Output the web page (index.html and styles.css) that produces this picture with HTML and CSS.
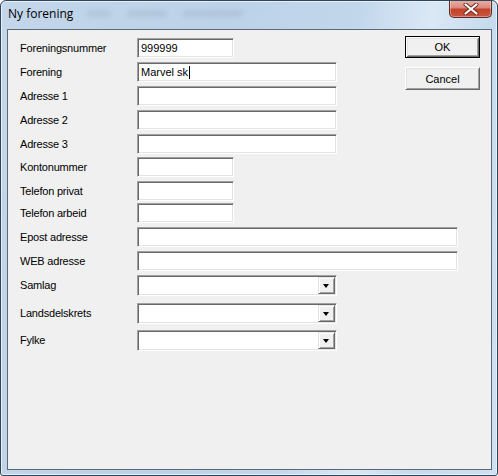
FILE: index.html
```html
<!DOCTYPE html>
<html>
<head>
<meta charset="utf-8">
<link rel="stylesheet" href="styles.css">
</head>
<body>
<div class="window">
  <div class="titlebar">
    <span class="title">Ny forening</span>
    <div class="ghosts">
      <span class="ghost g1"></span>
      <span class="ghost g2"></span>
      <span class="ghost g3"></span>
    </div>
    <button class="close" aria-label="Lukk">
      <svg width="16" height="12" viewBox="0 0 16 12">
        <path d="M2.5 1.5 L13.5 10.5 M13.5 1.5 L2.5 10.5" stroke="#6b2a22" stroke-width="4" stroke-linecap="round"/>
        <path d="M2.5 1.5 L13.5 10.5 M13.5 1.5 L2.5 10.5" stroke="#ffffff" stroke-width="2.2" stroke-linecap="round"/>
      </svg>
    </button>
  </div>
  <div class="client">
    <div class="form">
      <div class="row"><span class="label">Foreningsnummer</span><div class="field short">999999</div></div>
      <div class="row"><span class="label">Forening</span><div class="field medium">Marvel sk<span class="caret"></span></div></div>
      <div class="row"><span class="label">Adresse 1</span><div class="field medium"></div></div>
      <div class="row"><span class="label">Adresse 2</span><div class="field medium"></div></div>
      <div class="row"><span class="label">Adresse 3</span><div class="field medium"></div></div>
      <div class="row tight"><span class="label">Kontonummer</span><div class="field short"></div></div>
      <div class="row"><span class="label">Telefon privat</span><div class="field short"></div></div>
      <div class="row tighter"><span class="label">Telefon arbeid</span><div class="field short"></div></div>
      <div class="row"><span class="label">Epost adresse</span><div class="field long"></div></div>
      <div class="row"><span class="label">WEB adresse</span><div class="field long"></div></div>
      <div class="row"><span class="label">Samlag</span><div class="field medium combo"><span class="drop"></span></div></div>
      <div class="row wide"><span class="label">Landsdelskrets</span><div class="field medium combo"><span class="drop"></span></div></div>
      <div class="row wider"><span class="label">Fylke</span><div class="field medium combo"><span class="drop"></span></div></div>
    </div>
    <div class="buttons">
      <button class="btn default">OK</button>
      <button class="btn">Cancel</button>
    </div>
  </div>
</div>
</body>
</html>
```
FILE: styles.css
```css
html, body {
  margin: 0;
  padding: 0;
  background: #ffffff;
}

.window {
  box-sizing: border-box;
  width: 498px;
  height: 476px;
  border: 1px solid #30455c;
  border-radius: 6px 6px 3px 3px;
  background: linear-gradient(100deg, #c3d6ea 0%, #bcd2e8 40%, #c2d7ec 62%, #dbe8f5 75%, #c6dbee 85%, #cfe1f2 100%);
  box-shadow: inset 0 0 0 1px #e6f0fa;
  display: flex;
  flex-direction: column;
  position: relative;
  overflow: hidden;
}

.titlebar {
  height: 28px;
  display: flex;
  align-items: flex-start;
  position: relative;
}

.title {
  font-family: "Open Sans", "Noto Sans", sans-serif;
  font-size: 12px;
  color: #000;
  margin: 5px 0 0 7px;
  line-height: 16px;
  position: relative;
  z-index: 1;
}

.ghosts {
  display: flex;
  gap: 16px;
  margin: 9px 0 0 14px;
  opacity: 0.14;
  filter: blur(2px);
}

.ghost {
  display: block;
  height: 7px;
  background: #6a7f96;
  border-radius: 3px;
}
.g1 { width: 24px; }
.g2 { width: 40px; }
.g3 { width: 60px; }

.close {
  position: absolute;
  right: 5px;
  top: -1px;
  width: 43px;
  height: 18px;
  padding: 0;
  border: 1px solid #5e2a24;
  border-top: none;
  border-radius: 0 0 5px 5px;
  background: linear-gradient(#e8b2a6 0%, #d98b7b 45%, #c4412b 55%, #c8563f 100%);
  box-shadow: inset 0 0 0 1px rgba(255,255,255,0.35);
  display: flex;
  align-items: center;
  justify-content: center;
}

.client {
  box-sizing: border-box;
  margin: 0 5px 0 6px;
  width: 485px;
  height: 441px;
  border: 1px solid #5b6876;
  background: #f0f0f0;
  display: flex;
  padding: 6px 11px 0 12px;
  font-family: "Liberation Sans", Arial, sans-serif;
  font-size: 11px;
  color: #000;
}

.form {
  flex: 1;
  min-width: 0;
  padding-top: 2px;
  display: flex;
  flex-direction: column;
  gap: 4px;
}

.row {
  display: flex;
  align-items: center;
  height: 20px;
}
.row.tight { margin-top: -1px; }
.row.tighter { margin-top: -2px; }
.row.wide { margin-top: 4px; }
.row.wider { margin-top: 3px; }

.label {
  width: 117px;
  flex: none;
  letter-spacing: -0.2px;
}

.field {
  flex: none;
  box-sizing: border-box;
  height: 20px;
  background: #fff;
  border: 1px solid;
  border-color: #a0a0a0 #ffffff #ffffff #a0a0a0;
  box-shadow: inset 1px 1px 0 #696969, inset -1px -1px 0 #e3e3e3;
  padding: 3px 0 0 3px;
  line-height: 13px;
  display: flex;
  align-items: flex-start;
  position: relative;
}

.short { width: 97px; }
.medium { width: 200px; }
.long { width: 321px; }

.combo { height: 21px; }

.caret {
  display: inline-block;
  width: 1px;
  height: 13px;
  background: #000;
  margin-left: 1px;
}

.drop {
  position: absolute;
  right: 1px;
  top: 1px;
  box-sizing: border-box;
  width: 17px;
  height: 17px;
  background: #f0f0f0;
  border: 1px solid;
  border-color: #e3e3e3 #696969 #696969 #e3e3e3;
  box-shadow: inset 1px 1px 0 #ffffff, inset -1px -1px 0 #a0a0a0;
}
.drop::after {
  content: "";
  position: absolute;
  left: 4px;
  top: 6px;
  border-left: 3.5px solid transparent;
  border-right: 3.5px solid transparent;
  border-top: 4px solid #000;
}

.buttons {
  flex: none;
  width: 75px;
  display: flex;
  flex-direction: column;
  gap: 8px;
}

.btn {
  box-sizing: border-box;
  width: 75px;
  height: 23px;
  font-family: "Liberation Sans", Arial, sans-serif;
  font-size: 11px;
  color: #000;
  background: #f0f0f0;
  border: 1px solid;
  border-color: #ffffff #696969 #696969 #ffffff;
  box-shadow: inset 1px 1px 0 #e3e3e3, inset -1px -1px 0 #a0a0a0;
  padding: 0;
}
.btn.default {
  border: 1px solid #000;
  box-shadow: inset 1px 1px 0 #ffffff, inset -1px -1px 0 #696969, inset 2px 2px 0 #e3e3e3, inset -2px -2px 0 #a0a0a0;
  height: 22px;
  margin-bottom: 1px;
}
```
